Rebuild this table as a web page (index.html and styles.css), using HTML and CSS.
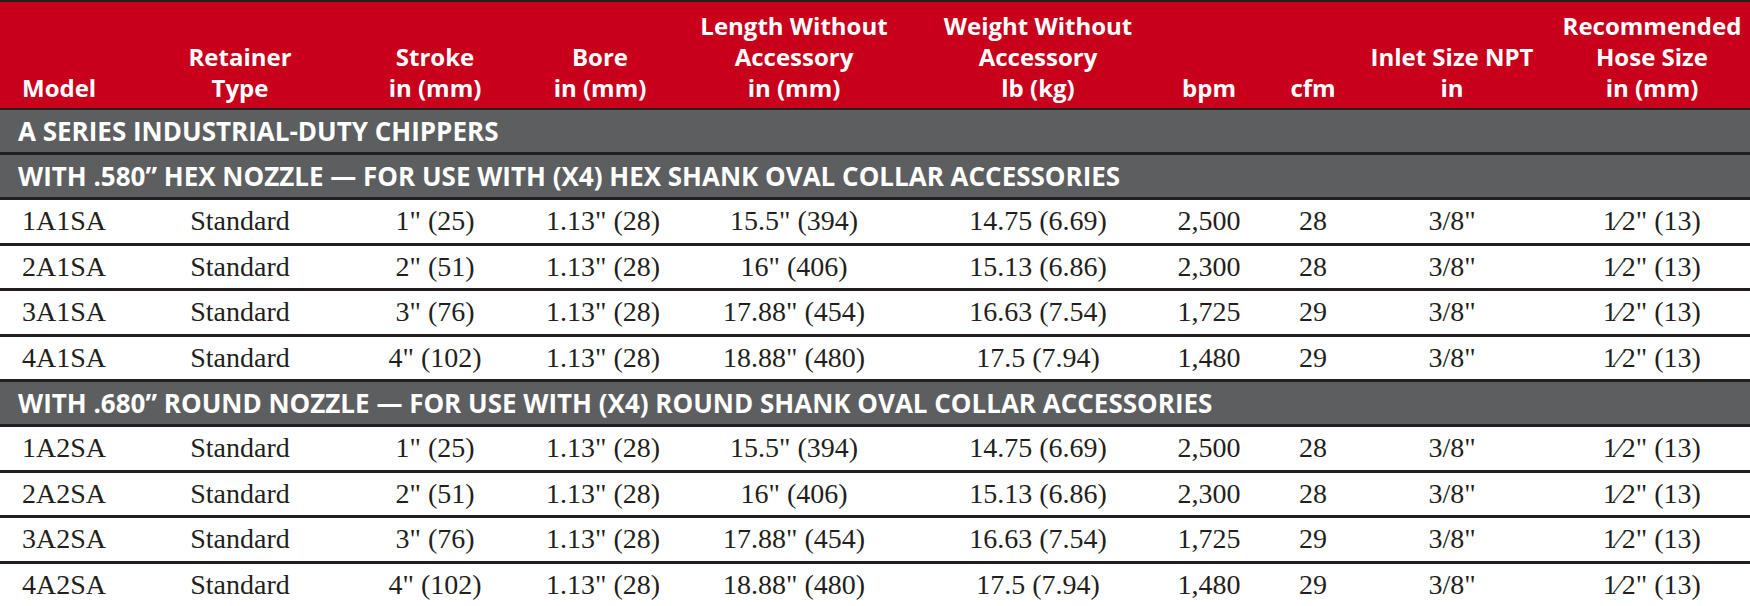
FILE: index.html
```html
<!DOCTYPE html>
<html lang="en">
<head>
<meta charset="utf-8">
<title>A Series Industrial-Duty Chippers</title>
<link rel="stylesheet" href="styles.css">
</head>
<body>
<table class="spec">
  <colgroup>
    <col class="w-model"><col class="w-ret"><col class="w-stroke"><col class="w-bore"><col class="w-len">
    <col class="w-wt"><col class="w-bpm"><col class="w-cfm"><col class="w-inlet"><col class="w-hose">
  </colgroup>
  <thead>
    <tr class="head">
      <th class="left">Model</th>
      <th>Retainer<br>Type</th>
      <th>Stroke<br>in (mm)</th>
      <th>Bore<br>in (mm)</th>
      <th>Length Without<br>Accessory<br>in (mm)</th>
      <th>Weight Without<br>Accessory<br>lb (kg)</th>
      <th>bpm</th>
      <th>cfm</th>
      <th>Inlet Size NPT<br>in</th>
      <th>Recommended<br>Hose Size<br>in (mm)</th>
    </tr>
  </thead>
  <tbody>
    <tr class="group"><td colspan="10">A SERIES INDUSTRIAL-DUTY CHIPPERS</td></tr>
    <tr class="group"><td colspan="10">WITH .580” HEX NOZZLE — FOR USE WITH (X4) HEX SHANK OVAL COLLAR ACCESSORIES</td></tr>
    <tr class="row"><td class="left">1A1SA</td><td>Standard</td><td>1" (25)</td><td>1.13" (28)</td><td>15.5" (394)</td><td>14.75 (6.69)</td><td>2,500</td><td>28</td><td>3/8"</td><td>1⁄2" (13)</td></tr>
    <tr class="row"><td class="left">2A1SA</td><td>Standard</td><td>2" (51)</td><td>1.13" (28)</td><td>16" (406)</td><td>15.13 (6.86)</td><td>2,300</td><td>28</td><td>3/8"</td><td>1⁄2" (13)</td></tr>
    <tr class="row"><td class="left">3A1SA</td><td>Standard</td><td>3" (76)</td><td>1.13" (28)</td><td>17.88" (454)</td><td>16.63 (7.54)</td><td>1,725</td><td>29</td><td>3/8"</td><td>1⁄2" (13)</td></tr>
    <tr class="row"><td class="left">4A1SA</td><td>Standard</td><td>4" (102)</td><td>1.13" (28)</td><td>18.88" (480)</td><td>17.5 (7.94)</td><td>1,480</td><td>29</td><td>3/8"</td><td>1⁄2" (13)</td></tr>
    <tr class="group"><td colspan="10">WITH .680” ROUND NOZZLE — FOR USE WITH (X4) ROUND SHANK OVAL COLLAR ACCESSORIES</td></tr>
    <tr class="row"><td class="left">1A2SA</td><td>Standard</td><td>1" (25)</td><td>1.13" (28)</td><td>15.5" (394)</td><td>14.75 (6.69)</td><td>2,500</td><td>28</td><td>3/8"</td><td>1⁄2" (13)</td></tr>
    <tr class="row"><td class="left">2A2SA</td><td>Standard</td><td>2" (51)</td><td>1.13" (28)</td><td>16" (406)</td><td>15.13 (6.86)</td><td>2,300</td><td>28</td><td>3/8"</td><td>1⁄2" (13)</td></tr>
    <tr class="row"><td class="left">3A2SA</td><td>Standard</td><td>3" (76)</td><td>1.13" (28)</td><td>17.88" (454)</td><td>16.63 (7.54)</td><td>1,725</td><td>29</td><td>3/8"</td><td>1⁄2" (13)</td></tr>
    <tr class="row last"><td class="left">4A2SA</td><td>Standard</td><td>4" (102)</td><td>1.13" (28)</td><td>18.88" (480)</td><td>17.5 (7.94)</td><td>1,480</td><td>29</td><td>3/8"</td><td>1⁄2" (13)</td></tr>
  </tbody>
</table>
</body>
</html>
```

FILE: styles.css
```css
html, body {
  margin: 0;
  padding: 0;
  background: #ffffff;
}

.spec {
  width: 1750px;
  table-layout: fixed;
  border-collapse: separate;
  border-spacing: 0;
  border-top: 2px solid #231f20;
}

.w-model { width: 156px; }
.w-ret { width: 168px; }
.w-stroke { width: 222px; }
.w-bore { width: 108px; }
.w-len { width: 280px; }
.w-wt { width: 208px; }
.w-bpm { width: 134px; }
.w-cfm { width: 74px; }
.w-inlet { width: 204px; }
.w-hose { width: 196px; }

.head th {
  background: #c8001c;
  color: #ffffff;
  font-family: "Open Sans", "DejaVu Sans", sans-serif;
  font-weight: 700;
  font-size: 24px;
  line-height: 31px;
  text-align: center;
  vertical-align: bottom;
  padding: 8px 0 5px 0;
  border-bottom: 2px solid #231f20;
  white-space: nowrap;
}

.head th.left {
  text-align: left;
  padding-left: 22px;
}

.group td {
  background: #5d5e60;
  color: #ffffff;
  font-family: "Open Sans", "DejaVu Sans", sans-serif;
  font-weight: 700;
  font-size: 26px;
  line-height: 42px;
  padding: 0 0 0 18px;
  border-bottom: 3px solid #231f20;
  white-space: nowrap;
}

.row td {
  font-family: "Liberation Serif", "Times New Roman", serif;
  font-size: 28px;
  color: #231f20;
  line-height: 42.5px;
  text-align: center;
  padding: 0;
  border-bottom: 3px solid #231f20;
  white-space: nowrap;
}

.row td.left {
  text-align: left;
  padding-left: 22px;
}

.row.last td {
  border-bottom: 2px solid #e2e2e2;
}
```
